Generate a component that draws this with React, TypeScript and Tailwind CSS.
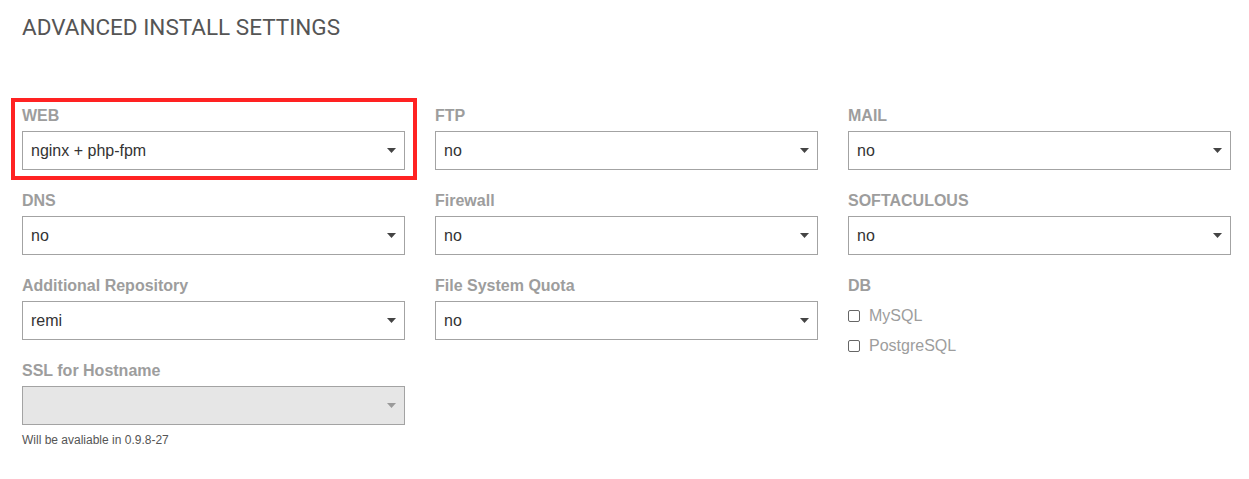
import React from 'react';

type Field = { label: string; value?: string; disabled?: boolean; hint?: string };

const columns: Field[][] = [
  [
    { label: 'WEB', value: 'nginx + php-fpm' },
    { label: 'DNS', value: 'no' },
    { label: 'Additional Repository', value: 'remi' },
    { label: 'SSL for Hostname', value: '', disabled: true, hint: 'Will be avaliable in 0.9.8-27' },
  ],
  [
    { label: 'FTP', value: 'no' },
    { label: 'Firewall', value: 'no' },
    { label: 'File System Quota', value: 'no' },
  ],
  [
    { label: 'MAIL', value: 'no' },
    { label: 'SOFTACULOUS', value: 'no' },
  ],
];

function Arrow({ light }: { light?: boolean }) {
  return (
    <svg width="9" height="5" viewBox="0 0 9 5" className="shrink-0">
      <path d="M0 0h9L4.5 5z" fill={light ? '#9a9a9a' : '#444'} />
    </svg>
  );
}

function SelectBox({ field }: { field: Field }) {
  return (
    <div className="mb-[22px]">
      <div className="text-[16px] leading-[18px] font-bold text-[#9d9d9d] mb-[6px]">{field.label}</div>
      <div
        className={`h-[39px] border border-[#a3a3a3] flex items-center justify-between pl-[8px] pr-[8px] ${
          field.disabled ? 'bg-[#e6e6e6]' : 'bg-white'
        }`}
      >
        <span className="text-[16px] text-[#333]">{field.value}</span>
        <Arrow light={field.disabled} />
      </div>
      {field.hint && (
        <div className="text-[12px] leading-[14px] text-[#555] mt-[8px] -mb-[22px]">{field.hint}</div>
      )}
    </div>
  );
}

function Checkbox({ label }: { label: string }) {
  return (
    <div className="h-[30px] flex items-center gap-[9px]">
      <span className="w-[12px] h-[12px] rounded-[2px] border border-[#666] bg-white" />
      <span className="text-[16px] text-[#9d9d9d]">{label}</span>
    </div>
  );
}

export default function App() {
  return (
    <div className="relative w-[1249px] h-[479px] bg-white overflow-hidden" style={{ fontFamily: '"Liberation Sans", Arial, sans-serif' }}>
      <h1
        className="pt-[14px] pl-[22px] text-[22.5px] leading-[26px] text-[#555] uppercase"
        style={{ fontFamily: 'Roboto, sans-serif' }}
      >
        Advanced Install Settings
      </h1>
      <div className="grid grid-cols-3 gap-x-[30px] pl-[22px] pr-[18px] mt-[67px]">
        {columns.map((col, i) => (
          <div key={i} className="flex flex-col">
            {col.map((f) => (
              <SelectBox key={f.label} field={f} />
            ))}
            {i === 2 && (
              <div>
                <div className="text-[16px] leading-[18px] font-bold text-[#9d9d9d] mb-[6px]">DB</div>
                <Checkbox label="MySQL" />
                <Checkbox label="PostgreSQL" />
              </div>
            )}
          </div>
        ))}
      </div>
      <div className="absolute left-[11px] top-[98px] w-[406px] h-[82px] border-4 border-[#ff2222]" />
    </div>
  );
}
